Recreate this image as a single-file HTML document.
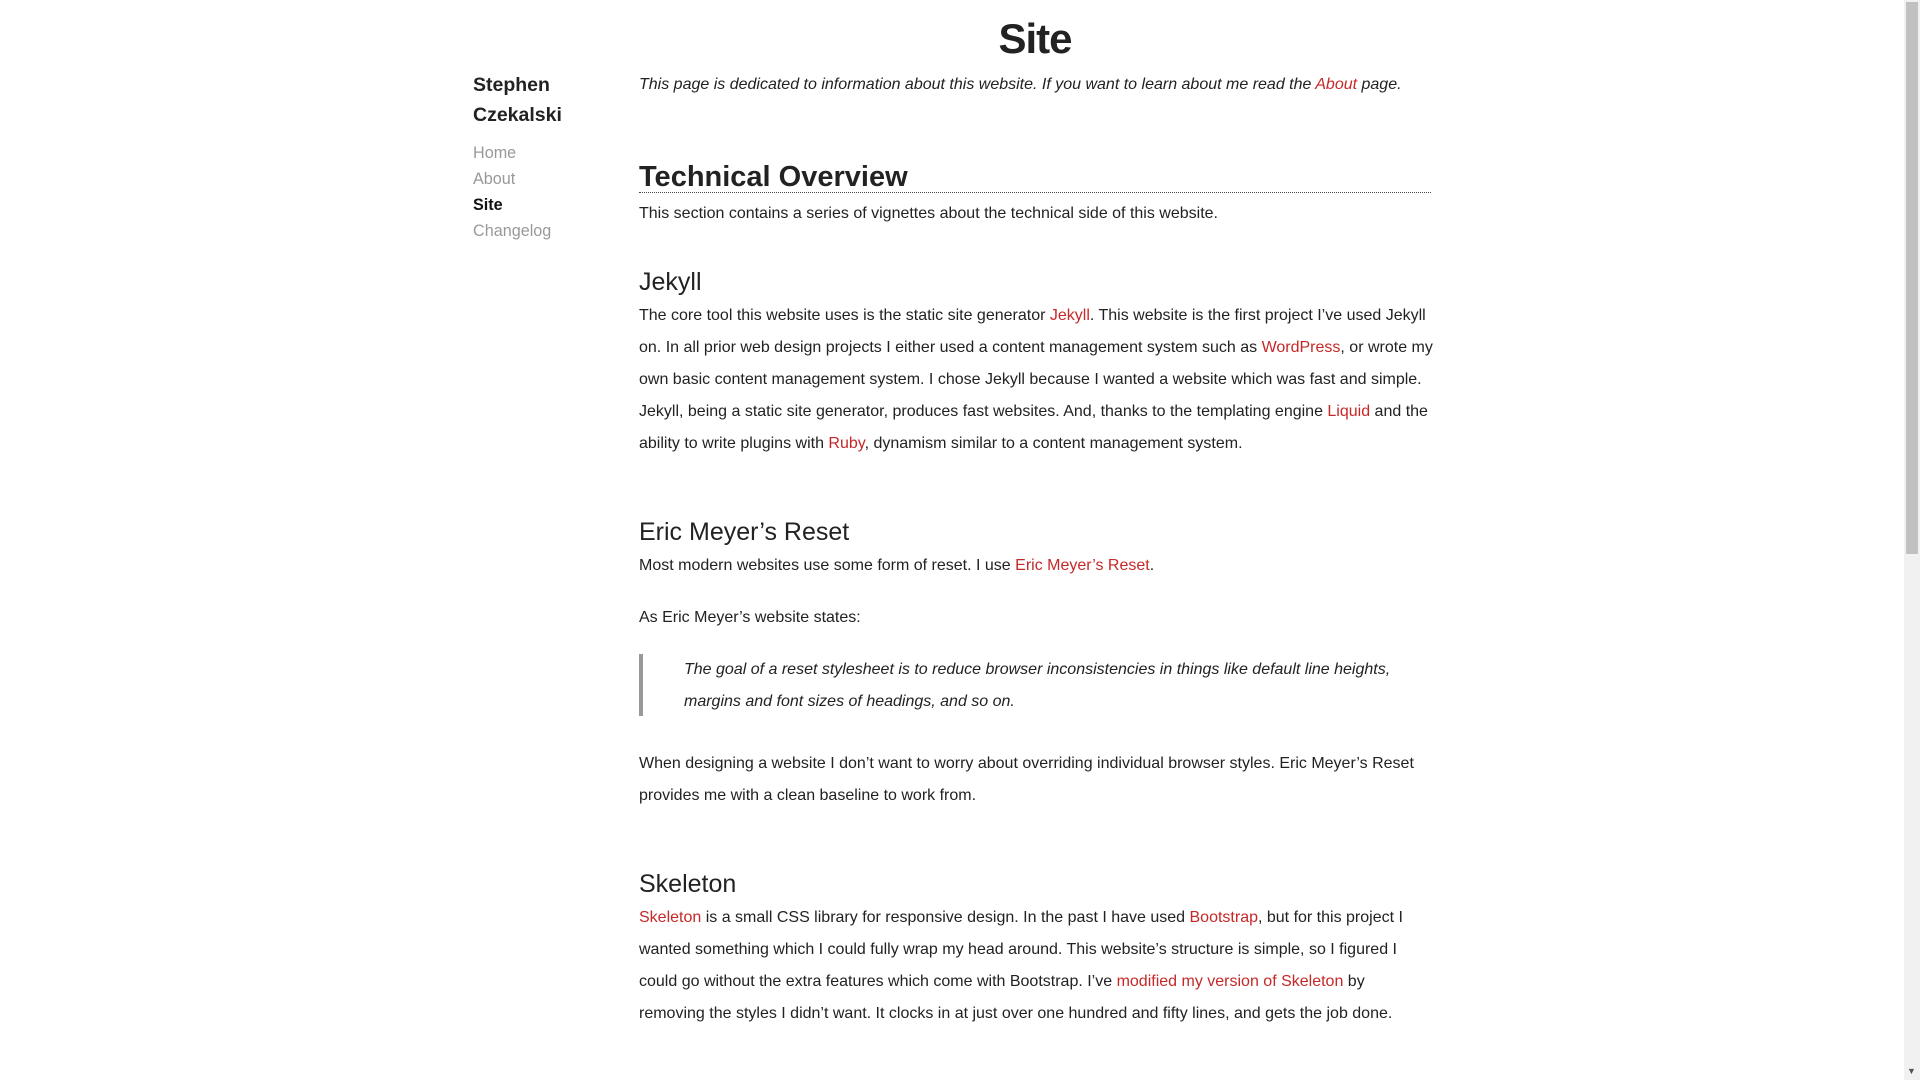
<!DOCTYPE html>
<html><head><meta charset="utf-8"><style>
html,body{margin:0;padding:0;background:#fff;width:1920px;height:1080px;overflow:hidden}
body{font-family:"Liberation Sans",Arial,sans-serif;color:#222;position:relative}
.a{position:absolute;white-space:nowrap}
a{color:#c62828;text-decoration:none}
.p{font-size:16px;line-height:32px}
.h3{font-size:25px;line-height:32px;color:#222}
.nav{font-size:16.2px;line-height:26px;color:#999}
.sb{position:absolute;left:1904px;top:0;width:16px;height:1080px;background:#f1f1f1}
.th{position:absolute;left:1906px;top:2px;width:12px;height:552px;background:#c1c1c1}
</style></head><body>
<div class="a" style="left:0;width:2070px;text-align:center;top:11px;font-size:42px;letter-spacing:-1px;font-weight:bold;line-height:56px">Site</div>

<div class="a" style="left:473px;top:70px;font-size:19.5px;font-weight:bold;line-height:30px">Stephen<br>Czekalski</div>
<div class="a nav" style="left:473px;top:140px">Home<br>About<br><span style="color:#111;font-weight:bold">Site</span><br>Changelog</div>

<div class="a p" style="left:639px;top:69px;font-style:italic">This page is dedicated to information about this website. If you want to learn about me read the <a>About</a> page.</div>

<div class="a" style="left:639px;top:157px;width:792px;font-size:29px;font-weight:bold;line-height:40px;border-bottom:1px dotted #444;height:35px">Technical Overview</div>
<div class="a p" style="left:639px;top:198px">This section contains a series of vignettes about the technical side of this website.</div>

<div class="a h3" style="left:639px;top:266px">Jekyll</div>
<div class="a p" style="left:639px;top:300px">The core tool this website uses is the static site generator <a>Jekyll</a>. This website is the first project I’ve used Jekyll<br>on. In all prior web design projects I either used a content management system such as <a>WordPress</a>, or wrote my<br>own basic content management system. I chose Jekyll because I wanted a website which was fast and simple.<br>Jekyll, being a static site generator, produces fast websites. And, thanks to the templating engine <a>Liquid</a> and the<br>ability to write plugins with <a>Ruby</a>, dynamism similar to a content management system.</div>

<div class="a h3" style="left:639px;top:516px">Eric Meyer’s Reset</div>
<div class="a p" style="left:639px;top:550px">Most modern websites use some form of reset. I use <a>Eric Meyer’s Reset</a>.</div>
<div class="a p" style="left:639px;top:602px">As Eric Meyer’s website states:</div>
<div class="a" style="left:639px;top:654px;width:4px;height:62px;background:#999"></div>
<div class="a p" style="left:684px;top:654px;font-style:italic">The goal of a reset stylesheet is to reduce browser inconsistencies in things like default line heights,<br>margins and font sizes of headings, and so on.</div>
<div class="a p" style="left:639px;top:748px">When designing a website I don’t want to worry about overriding individual browser styles. Eric Meyer’s Reset<br>provides me with a clean baseline to work from.</div>

<div class="a h3" style="left:639px;top:868px">Skeleton</div>
<div class="a p" style="left:639px;top:902px"><a>Skeleton</a> is a small CSS library for responsive design. In the past I have used <a>Bootstrap</a>, but for this project I<br>wanted something which I could fully wrap my head around. This website’s structure is simple, so I figured I<br>could go without the extra features which come with Bootstrap. I’ve <a>modified my version of Skeleton</a> by<br>removing the styles I didn’t want. It clocks in at just over one hundred and fifty lines, and gets the job done.</div>

<div class="sb"></div><div class="th"></div>
<div class="a" style="left:1907px;top:1066px;font-size:9px;color:#555">▼</div>
</body></html>
